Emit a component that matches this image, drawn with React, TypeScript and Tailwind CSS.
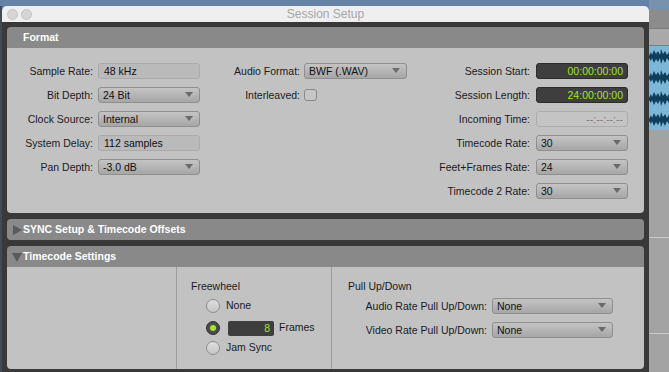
import React from 'react';

const Arrow = () => (
  <span className="absolute right-[6px] top-[4px] h-0 w-0 border-x-[4px] border-t-[5px] border-x-transparent border-t-[#6b6b6b]" />
);

const Dropdown = ({ value, className }: { value: string; className: string }) => (
  <div
    className={`relative h-[16px] shrink-0 rounded-[3px] border border-[#8f8f8f] bg-linear-to-b from-[#c4c4c4] to-[#a6a6a6] pl-[4px] text-[10.5px] leading-[14px] text-[#111] ${className}`}
  >
    {value}
    <Arrow />
  </div>
);

const ReadOnly = ({ value, className }: { value: string; className: string }) => (
  <div
    className={`h-[16px] shrink-0 rounded-[3px] border border-[#aaaaaa] bg-[#bababa] pl-[5px] text-[10.5px] leading-[14px] text-[#111] ${className}`}
  >
    {value}
  </div>
);

const TimeField = ({ value, className }: { value: string; className: string }) => (
  <div
    className={`h-[16px] shrink-0 rounded-[3px] border border-[#2c2c2c] bg-[#3e3e3e] pr-[4px] text-right text-[10.5px] leading-[14px] text-[#a3e22b] ${className}`}
  >
    {value}
  </div>
);

const Row = ({ label, labelW, gap, children }: { label: string; labelW: string; gap: string; children: React.ReactNode }) => (
  <div className={`flex h-[16px] items-center ${gap}`}>
    <div className={`${labelW} shrink-0 text-right text-[10.5px] leading-[16px] text-[#1b1b22]`}>{label}</div>
    {children}
  </div>
);

const Radio = ({ on }: { on?: boolean }) =>
  on ? (
    <span className="flex h-[14px] w-[14px] shrink-0 items-center justify-center rounded-full border border-[#2f2f2f] bg-[#4b4b4b]">
      <span className="h-[6px] w-[6px] rounded-full bg-[#a6e22e]" />
    </span>
  ) : (
    <span className="h-[14px] w-[14px] shrink-0 rounded-full border border-[#8e8e8e] bg-linear-to-b from-[#dedede] to-[#c6c6c6]" />
  );

const Header = ({ title, arrow, rounded }: { title: string; arrow?: 'right' | 'down'; rounded?: boolean }) => (
  <div
    className={`relative flex h-[21px] items-center bg-[#898989] pl-[16px] text-[10.5px] font-bold text-white ${rounded ? 'rounded-[4px]' : 'rounded-t-[4px]'}`}
  >
    {arrow === 'right' && (
      <span className="absolute left-[6px] top-[6px] h-0 w-0 border-y-[5px] border-l-[9px] border-y-transparent border-l-[#5a5a5a]" />
    )}
    {arrow === 'down' && (
      <span className="absolute left-[5px] top-[7px] h-0 w-0 border-x-[5px] border-t-[9px] border-x-transparent border-t-[#5a5a5a]" />
    )}
    {title}
  </div>
);

const Waveform = () => (
  <svg width="20" height="84" viewBox="0 0 20 84" className="block">
    <rect width="20" height="84" fill="#7db6d6" />
    {[0, 21, 42, 63].map((y) => (
      <g key={y}>
        <polygon
          points={`0,${y + 10} 2,${y + 6} 3,${y + 9} 5,${y + 4} 7,${y + 8} 9,${y + 5} 11,${y + 9} 12,${y + 3} 14,${y + 8} 16,${y + 5} 18,${y + 9} 20,${y + 6} 20,${y + 15} 18,${y + 12} 16,${y + 17} 14,${y + 13} 12,${y + 18} 11,${y + 12} 9,${y + 16} 7,${y + 13} 5,${y + 17} 3,${y + 12} 2,${y + 15} 0,${y + 12}`}
          fill="#0f3d5c"
        />
      </g>
    ))}
  </svg>
);

export default function App() {
  return (
    <div className="flex h-[372px] w-[669px] overflow-hidden bg-[#6383a7] font-['Liberation_Sans',Arial,sans-serif]">
      {/* left edge of the app behind */}
      <div className="mt-[6px] w-[2px] shrink-0 bg-[#3f4c58]" />

      {/* Session Setup window */}
      <div className="mt-[6px] flex w-[647px] shrink-0 flex-col">
        <div className="grid h-[16px] grid-cols-[1fr_auto_1fr] items-center rounded-t-[5px] bg-[#efefef]">
          <div className="flex gap-[3px] pl-[5px]">
            <span className="h-[11px] w-[11px] rounded-full border border-[#c4c4c4] bg-[#d6d6d6]" />
            <span className="h-[11px] w-[11px] rounded-full border border-[#c4c4c4] bg-[#d6d6d6]" />
          </div>
          <div className="text-[12px] leading-[16px] text-[#a6a6a6]">Session Setup</div>
          <div />
        </div>

        <div className="flex flex-1 flex-col gap-[6px] bg-[#393939] px-[5px] pt-[5px] pb-[3px]">
          {/* Format */}
          <div className="flex flex-col">
            <Header title="Format" />
            <div className="flex h-[165px] rounded-b-[4px] bg-[#c2c2c2] pt-[15px]">
              <div className="flex w-[193px] flex-col gap-[8px]">
                <Row label="Sample Rate:" labelW="w-[86px]" gap="gap-[5px]">
                  <ReadOnly value="48 kHz" className="w-[102px]" />
                </Row>
                <Row label="Bit Depth:" labelW="w-[86px]" gap="gap-[5px]">
                  <Dropdown value="24 Bit" className="w-[102px]" />
                </Row>
                <Row label="Clock Source:" labelW="w-[86px]" gap="gap-[5px]">
                  <Dropdown value="Internal" className="w-[102px]" />
                </Row>
                <Row label="System Delay:" labelW="w-[86px]" gap="gap-[5px]">
                  <ReadOnly value="112 samples" className="w-[102px]" />
                </Row>
                <Row label="Pan Depth:" labelW="w-[86px]" gap="gap-[5px]">
                  <Dropdown value="-3.0 dB" className="w-[102px]" />
                </Row>
              </div>

              <div className="flex w-[207px] flex-col gap-[8px]">
                <Row label="Audio Format:" labelW="w-[100px]" gap="gap-[4px]">
                  <Dropdown value="BWF (.WAV)" className="w-[103px]" />
                </Row>
                <Row label="Interleaved:" labelW="w-[100px]" gap="gap-[4px]">
                  <span className="h-[12px] w-[13px] rounded-[3px] border border-[#8a8a8a] bg-[#c6c6c6]" />
                </Row>
              </div>

              <div className="flex w-[221px] flex-col gap-[8px]">
                <Row label="Session Start:" labelW="w-[123px]" gap="gap-[6px]">
                  <TimeField value="00:00:00:00" className="w-[92px]" />
                </Row>
                <Row label="Session Length:" labelW="w-[123px]" gap="gap-[6px]">
                  <TimeField value="24:00:00:00" className="w-[92px]" />
                </Row>
                <Row label="Incoming Time:" labelW="w-[123px]" gap="gap-[6px]">
                  <div className="h-[16px] w-[92px] rounded-[3px] border border-[#adadad] bg-[#c4c4c4] pr-[4px] text-right text-[10.5px] leading-[14px] text-[#7a7a7a]">
                    --:--:--:--
                  </div>
                </Row>
                <Row label="Timecode Rate:" labelW="w-[123px]" gap="gap-[6px]">
                  <Dropdown value="30" className="w-[92px]" />
                </Row>
                <Row label="Feet+Frames Rate:" labelW="w-[123px]" gap="gap-[6px]">
                  <Dropdown value="24" className="w-[92px]" />
                </Row>
                <Row label="Timecode 2 Rate:" labelW="w-[123px]" gap="gap-[6px]">
                  <Dropdown value="30" className="w-[92px]" />
                </Row>
              </div>
            </div>
          </div>

          {/* SYNC */}
          <Header title="SYNC Setup & Timecode Offsets" arrow="right" rounded />

          {/* Timecode Settings */}
          <div className="flex flex-1 flex-col">
            <Header title="Timecode Settings" arrow="down" />
            <div className="flex flex-1 rounded-b-[4px] bg-[#c2c2c2] text-[10.5px] text-[#1b1b22]">
              <div className="w-[170px] shrink-0 border-r border-[#9d9d9d]" />
              <div className="flex w-[155px] shrink-0 flex-col border-r border-[#9d9d9d] pt-[13px] pl-[14px]">
                <div className="leading-[13px]">Freewheel</div>
                <div className="mt-[5px] flex h-[16px] items-center gap-[6px] pl-[15px]">
                  <Radio />
                  <span>None</span>
                </div>
                <div className="mt-[6px] flex h-[16px] items-center pl-[15px]">
                  <Radio on />
                  <div className="ml-[8px] h-[15px] w-[46px] rounded-[2px] bg-[#3e3e3e] pr-[4px] text-right leading-[15px] text-[#a3e22b]">
                    8
                  </div>
                  <span className="ml-[5px]">Frames</span>
                </div>
                <div className="mt-[4px] flex h-[16px] items-center gap-[6px] pl-[15px]">
                  <Radio />
                  <span>Jam Sync</span>
                </div>
              </div>
              <div className="flex flex-1 flex-col pt-[13px] pl-[16px]">
                <div className="leading-[13px]">Pull Up/Down</div>
                <div className="mt-[5px] flex flex-col gap-[8px] pl-[16px]">
                  <Row label="Audio Rate Pull Up/Down:" labelW="w-[123px]" gap="gap-[5px]">
                    <Dropdown value="None" className="w-[121px]" />
                  </Row>
                  <Row label="Video Rate Pull Up/Down:" labelW="w-[123px]" gap="gap-[5px]">
                    <Dropdown value="None" className="w-[121px]" />
                  </Row>
                </div>
              </div>
            </div>
          </div>
        </div>
      </div>

      {/* app content behind, on the right */}
      <div className="flex flex-1 flex-col">
        <div className="h-[10px] bg-[#7891ad]" />
        <div className="h-[18px] bg-[#8c8c8c]" />
        <div className="h-[18px] border-y border-[#7d7d7d] bg-[#a9a9a9]" />
        <Waveform />
        <div className="h-[108px] border-b border-[#c8c8c8] bg-[#a3a3a3]" />
        <div className="h-[96px] border-b border-[#c8c8c8] bg-[#a3a3a3]" />
        <div className="flex-1 bg-[#a3a3a3]" />
      </div>
    </div>
  );
}
